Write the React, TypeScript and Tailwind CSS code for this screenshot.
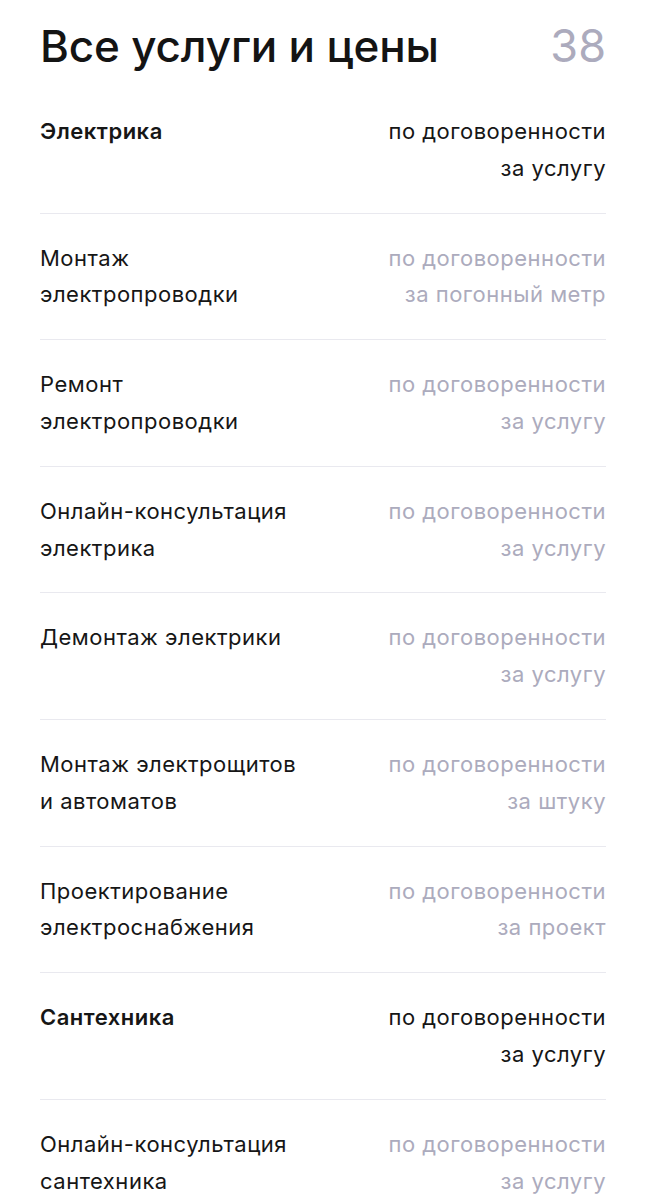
import React from 'react'

type Service = {
  name: string
  price: string
  unit: string
  category?: boolean
}

const services: Service[] = [
  { name: 'Электрика', price: 'по договоренности', unit: 'за услугу', category: true },
  { name: 'Монтаж электропроводки', price: 'по договоренности', unit: 'за погонный метр' },
  { name: 'Ремонт электропроводки', price: 'по договоренности', unit: 'за услугу' },
  { name: 'Онлайн-консультация электрика', price: 'по договоренности', unit: 'за услугу' },
  { name: 'Демонтаж электрики', price: 'по договоренности', unit: 'за услугу' },
  { name: 'Монтаж электрощитов и автоматов', price: 'по договоренности', unit: 'за штуку' },
  { name: 'Проектирование электроснабжения', price: 'по договоренности', unit: 'за проект' },
  { name: 'Сантехника', price: 'по договоренности', unit: 'за услугу', category: true },
  { name: 'Онлайн-консультация сантехника', price: 'по договоренности', unit: 'за услугу' },
]

function ServiceRow({ service }: { service: Service }) {
  return (
    <li className="flex justify-between gap-6 border-b border-[#e9e9ef] py-[26px] text-[22px] leading-[36.8px] tracking-[0.5px]">
      <div
        className={
          service.category
            ? 'w-[270px] font-semibold text-[#161616]'
            : 'w-[270px] text-[#161616]'
        }
      >
        {service.name}
      </div>
      <div className={service.category ? 'text-right text-[#161616]' : 'text-right text-[#acabbd]'}>
        <div>{service.price}</div>
        <div>{service.unit}</div>
      </div>
    </li>
  )
}

export default function App() {
  return (
    <div className="min-h-[1200px] bg-white px-10 font-['Inter','Roboto',sans-serif]">
      {/* Заголовок */}
      <div className="flex items-center justify-between pt-5">
        <h1 className="text-[44px] leading-[52px] font-medium tracking-[-0.15px] text-[#141414]">
          Все услуги и цены
        </h1>
        <span className="text-[45px] leading-[52px] text-[#acabbd]">38</span>
      </div>

      {/* Список */}
      <ul className="mt-[15px]">
        {services.map((s) => (
          <ServiceRow key={s.name} service={s} />
        ))}
      </ul>
    </div>
  )
}
